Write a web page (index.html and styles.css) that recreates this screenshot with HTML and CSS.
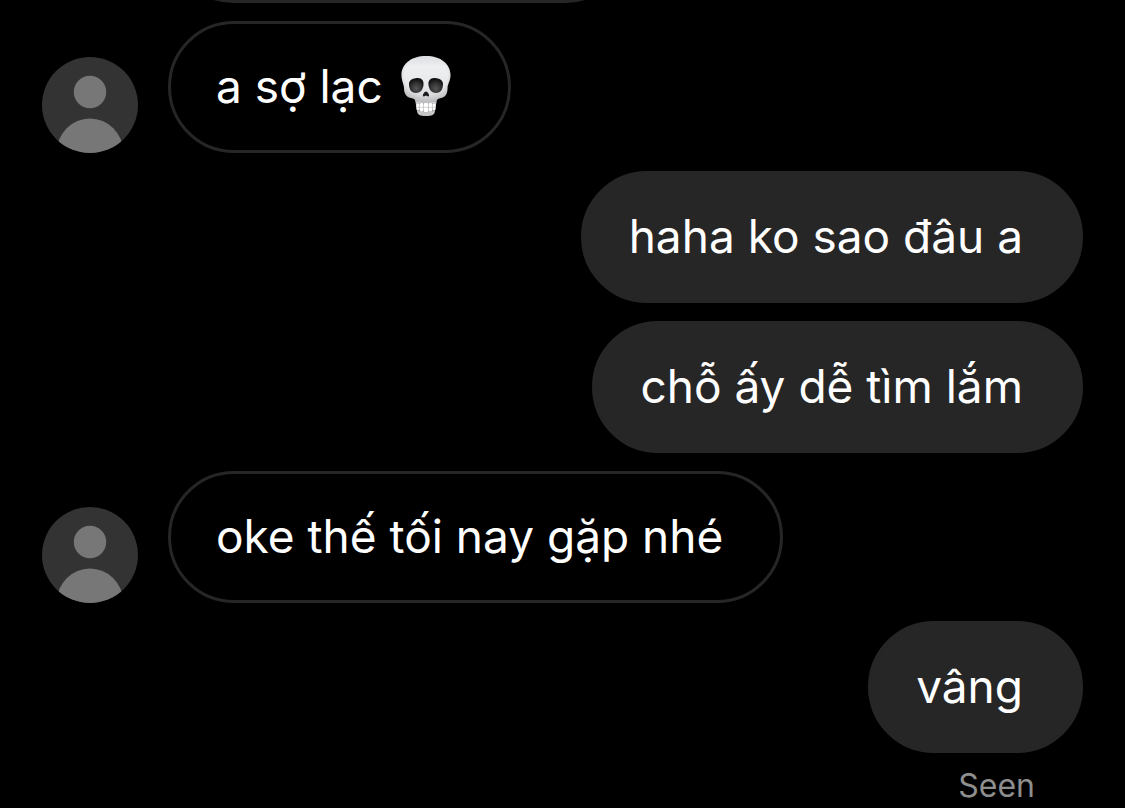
FILE: index.html
```html
<!DOCTYPE html>
<html lang="vi">
<head>
<meta charset="utf-8">
<meta name="viewport" content="width=device-width, initial-scale=1">
<title>Chat</title>
<link rel="stylesheet" href="styles.css">
</head>
<body>
<main class="thread">
  <div class="previous"><div class="bubble bubble-in bubble-previous"></div></div>

  <div class="row">
    <svg class="avatar" viewBox="0 0 96 96" aria-hidden="true">
      <defs><clipPath id="disc"><circle cx="48" cy="48" r="48"/></clipPath></defs>
      <circle cx="48" cy="48" r="48" fill="#333"/>
      <g clip-path="url(#disc)" fill="#777"><circle cx="48" cy="35" r="16.2"/><circle cx="48" cy="94.500" r="33"/></g>
    </svg>
    <p class="bubble bubble-in">a sợ lạc
      <svg class="skull" viewBox="1 0 50 62" role="img" aria-label="skull">
        <defs>
          <linearGradient id="bone" x1="0" y1="0" x2="0" y2="1">
            <stop offset="0" stop-color="#dcdde0"/><stop offset=".18" stop-color="#eeeff1"/><stop offset=".5" stop-color="#e8e8ea"/><stop offset=".75" stop-color="#d2d2d4"/><stop offset="1" stop-color="#c4c4c6"/>
          </linearGradient>
          <radialGradient id="shade" cx=".5" cy=".42" r=".62">
            <stop offset=".7" stop-color="#999" stop-opacity="0"/><stop offset="1" stop-color="#85888e" stop-opacity=".4"/>
          </radialGradient>
          <radialGradient id="socket" cx=".5" cy=".7" r=".6">
            <stop offset="0" stop-color="#555"/><stop offset=".6" stop-color="#333"/><stop offset="1" stop-color="#141414"/>
          </radialGradient>
        </defs>
        <path d="M26 1C11 1 1.500 9 1.500 20C1.500 26 4 29 4 33C4 38 6 42 11 43C14 43.500 15 44 15.500 47L17 56C17.500 60 20 61 26 61C32 61 34.500 60 35 56L36.500 47C37 44 38 43.500 41 43C46 42 47.500 38 47.500 33C47.500 29 50.500 26 50.500 20C50.500 9 41 1 26 1Z" fill="url(#bone)"/>
        <path d="M26 1C11 1 1.500 9 1.500 20C1.500 26 4 29 4 33C4 38 6 42 11 43C14 43.500 15 44 15.500 47L36.500 47C37 44 38 43.500 41 43C46 42 47.500 38 47.500 33C47.500 29 50.500 26 50.500 20C50.500 9 41 1 26 1Z" fill="url(#shade)"/>
        <path d="M9 29C9 25 13 23 18 23C22 23 24 26 23.500 30C23 35 20 38 16 38C11 38 9 34 9 29Z" fill="url(#socket)"/>
        <path d="M43 29C43 25 39 23 34 23C30 23 28 26 28.500 30C29 35 32 38 36 38C41 38 43 34 43 29Z" fill="url(#socket)"/>
        <path d="M26 36.500C24.500 36.500 22.500 39.500 23 41C23.500 42 25.500 41 26 40.500C26.500 41 28.500 42 29 41C29.500 39.500 27.500 36.500 26 36.500Z" fill="#1b1b1b"/>
        <path d="M16.500 48.500Q26 46.500 35.500 48.500L34.500 56Q26 58.500 17.500 56Z" fill="#a5a5a5"/>
        <g fill="#fff">
          <rect x="16.500" y="48.500" width="3" height="6.500" rx="1"/><rect x="20" y="48" width="3.300" height="8.500" rx="1"/><rect x="23.800" y="48" width="4.400" height="9" rx="1"/><rect x="28.700" y="48" width="3.300" height="8.500" rx="1"/><rect x="32.500" y="48.500" width="3" height="6.500" rx="1"/>
        </g>
        <path d="M17 52.300H35" stroke="#bbb" stroke-width=".6"/>
      </svg>
    </p>
  </div>

  <div class="row row-out"><p class="bubble bubble-out">haha ko sao đâu a</p></div>
  <div class="row row-out"><p class="bubble bubble-out">chỗ ấy dễ tìm lắm</p></div>

  <div class="row">
    <svg class="avatar" viewBox="0 0 96 96" aria-hidden="true">
      <circle cx="48" cy="48" r="48" fill="#333"/>
      <g clip-path="url(#disc)" fill="#777"><circle cx="48" cy="35" r="16.2"/><circle cx="48" cy="94.500" r="33"/></g>
    </svg>
    <p class="bubble bubble-in">oke thế tối nay gặp nhé</p>
  </div>

  <div class="row row-out"><p class="bubble bubble-out">vâng</p></div>
  <p class="status">Seen</p>
</main>
</body>
</html>
```
FILE: styles.css
```css
* { box-sizing: border-box; }

body {
  margin: 0;
  background: #000;
  color: #fff;
  font-family: Inter, "Noto Sans", sans-serif;
}

.thread {
  display: flex;
  flex-direction: column;
  gap: 18px;
  padding: 0 42px;
}

/* Only the lower edge of the preceding message is scrolled into view. */
.previous {
  display: flex;
  align-items: flex-end;
  height: 3px;
  padding-left: 126px;
  overflow: hidden;
}

.row {
  display: flex;
  align-items: flex-end;
  gap: 30px;
}

.row-out { justify-content: flex-end; }

.avatar {
  flex: none;
  width: 96px;
  height: 96px;
}

.bubble {
  display: flex;
  align-items: center;
  gap: 18px;
  min-height: 132px;
  margin: 0;
  padding: 30px 57px 32px 45px;
  border: 3px solid #262626;
  border-radius: 66px;
  font-size: 46px;
  line-height: 60px;
}

.bubble-out { background: #262626; }

.bubble-previous {
  flex: none;
  width: 463px;
}

.skull {
  flex: none;
  width: 50px;
  height: 62px;
}

.status {
  margin: -6px 48px 0 0;
  color: #8e8e8e;
  font-size: 32px;
  line-height: 42px;
  text-align: right;
}
```
